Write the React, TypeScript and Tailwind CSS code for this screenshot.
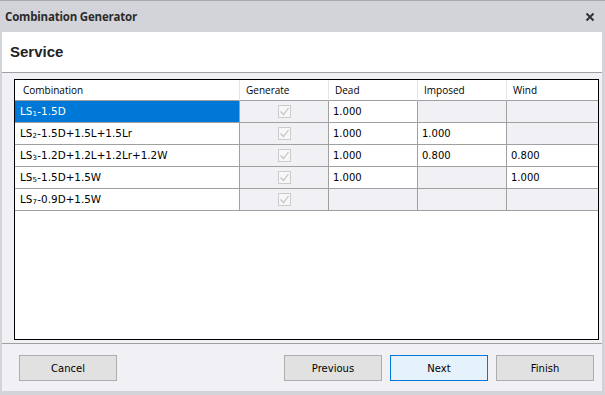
import React from "react";

type Row = {
  sub: string;
  rest: string;
  dead: string;
  imposed: string;
  wind: string;
  selected?: boolean;
};

const rows: Row[] = [
  { sub: "1", rest: "-1.5D", dead: "1.000", imposed: "", wind: "", selected: true },
  { sub: "2", rest: "-1.5D+1.5L+1.5Lr", dead: "1.000", imposed: "1.000", wind: "" },
  { sub: "3", rest: "-1.2D+1.2L+1.2Lr+1.2W", dead: "1.000", imposed: "0.800", wind: "0.800" },
  { sub: "5", rest: "-1.5D+1.5W", dead: "1.000", imposed: "", wind: "1.000" },
  { sub: "7", rest: "-0.9D+1.5W", dead: "", imposed: "", wind: "" },
];

const cellFont = { fontFamily: "Tahoma, 'DejaVu Sans', sans-serif" };

function Check() {
  return (
    <div className="w-[13px] h-[13px] border border-[#cccccc] bg-[#f7f7f7] flex items-center justify-center">
      <svg width="11" height="11" viewBox="0 0 11 11">
        <path d="M1.5 5.5 L4.5 8.5 L9.5 2" fill="none" stroke="#c2c2c2" strokeWidth="1.2" />
      </svg>
    </div>
  );
}

function ValueCell({ v, last }: { v: string; last?: boolean }) {
  return (
    <div
      className={`h-[22px] border-b border-[#a0a0a0] ${last ? "" : "border-r"} flex items-center pl-[4px] text-[10px] text-black ${
        v ? "bg-white" : "bg-[#f0f0f5]"
      }`}
      style={cellFont}
    >
      {v}
    </div>
  );
}

function Button({ label, primary }: { label: string; primary?: boolean }) {
  return (
    <button
      className={`w-[98px] h-[26px] border text-[10px] text-black flex items-center justify-center ${
        primary ? "bg-[#e5f1fb] border-[#0078d7]" : "bg-[#e1e1e1] border-[#adadad]"
      }`}
      style={cellFont}
    >
      {label}
    </button>
  );
}

export default function App() {
  return (
    <div className="w-[605px] h-[395px] bg-[#d3d4d9] flex flex-col overflow-hidden border-t border-[#a8a8ac]">
      <div className="h-[31px] flex items-center justify-between pl-[5px] pr-[10px]">
        <span
          className="text-[11.5px] font-bold text-[#2b2b2b] tracking-[-0.2px]"
          style={{ fontFamily: "'Open Sans', 'Noto Sans', sans-serif" }}
        >
          Combination Generator
        </span>
        <svg width="10" height="10" viewBox="0 0 10 10">
          <path d="M1.5 1.5 L8.5 8.5 M8.5 1.5 L1.5 8.5" stroke="#333" strokeWidth="2" />
        </svg>
      </div>
      <div className="flex-1 ml-[2px] mr-[3px] mb-[4px] flex flex-col">
        <div className="h-[41px] bg-white border-b border-[#a0a0a0] flex items-center pl-[8px]">
          <span
            className="text-[15px] font-bold text-[#222]"
            style={{ fontFamily: "'Liberation Sans', Arial, sans-serif" }}
          >
            Service
          </span>
        </div>
        <div className="flex-1 bg-[#f0f0f5] flex flex-col">
          <div className="mt-[6px] ml-[12px] mr-[3px] h-[261px] border border-black bg-white">
            <div className="grid grid-cols-[225px_89px_89px_89px_1fr]">
              {["Combination", "Generate", "Dead", "Imposed", "Wind"].map((h, i) => (
                <div
                  key={h}
                  className={`h-[21px] bg-white border-b border-[#a0a0a0] ${
                    i < 4 ? "border-r border-r-[#e5e5e5]" : ""
                  } flex items-center text-[10px] text-black ${i === 0 ? "pl-[8px]" : "pl-[6px]"}`}
                  style={{ fontFamily: "'Open Sans', 'Noto Sans', sans-serif" }}
                >
                  {h}
                </div>
              ))}
              {rows.map((r, idx) => (
                <React.Fragment key={idx}>
                  <div
                    className={`h-[22px] border-b border-r border-[#a0a0a0] flex items-center pl-[5px] text-[10.4px] ${
                      r.selected ? "bg-[#0078d7] text-white" : "bg-white text-black"
                    }`}
                    style={cellFont}
                  >
                    <span>LS</span>
                    <sub className="text-[7px] relative top-[2px] mr-[0.5px]">{r.sub}</sub>
                    <span>{r.rest}</span>
                  </div>
                  <div className="h-[22px] border-b border-r border-[#a0a0a0] bg-[#f0f0f5] flex items-center justify-center">
                    <Check />
                  </div>
                  <ValueCell v={r.dead} />
                  <ValueCell v={r.imposed} />
                  <ValueCell v={r.wind} last />
                </React.Fragment>
              ))}
            </div>
          </div>
          <div className="mt-[3px] border-t border-[#a0a0a0] flex-1 flex items-start pt-[11px] pl-[17px] pr-[8px]">
            <Button label="Cancel" />
            <div className="flex-1" />
            <div className="flex gap-[8px]">
              <Button label="Previous" />
              <Button label="Next" primary />
              <Button label="Finish" />
            </div>
          </div>
        </div>
      </div>
    </div>
  );
}
